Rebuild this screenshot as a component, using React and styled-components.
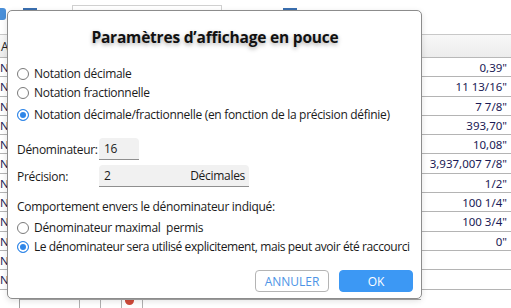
import React from 'react';
import styled, { createGlobalStyle, css } from 'styled-components';

const GlobalStyle = createGlobalStyle`
  html, body { margin: 0; padding: 0; background: #fff; }
  body { font-family: "Open Sans", "Noto Sans", sans-serif; overflow: hidden; }
`;

const Page = styled.div`
  position: relative;
  width: 511px;
  height: 308px;
  overflow: hidden;
  background: #fff;
`;

const Toolbar = styled.div`
  height: 35px;
  display: flex;
  align-items: flex-start;
  border-bottom: 1px solid #c8c8c8;
  box-sizing: border-box;
`;

const ToolIcon = styled.div`
  width: 6px;
  height: 12px;
  margin-top: 8px;
  background: #4a8fd8;
  border-radius: 0 3px 3px 0;
`;

const ToolMark = styled.div`
  width: 14px;
  height: 2px;
  margin: 8px 0 0 ${p => p.gap}px;
  background: #3a6fb0;
`;

const ToolField = styled.div`
  width: 150px;
  height: 20px;
  margin: 5px 0 0 ${p => p.gap}px;
  border: 1px solid #d0d0d0;
  box-sizing: border-box;
`;

const Sheet = styled.div`
  display: grid;
  grid-template-columns: 20px 1fr 90px;
`;

const Column = styled.div`
  display: flex;
  flex-direction: column;
  border-right: ${p => (p.edge ? '1px solid #a0a0a0' : 'none')};
`;

const HeadCell = styled.div`
  height: 23px;
  box-sizing: border-box;
  border-bottom: 1px solid #b8b8b8;
  background: linear-gradient(#f7f7f7, #ececec);
  font-size: 12px;
  line-height: 23px;
  padding-left: 1px;
  color: #222;
`;

const Cell = styled.div`
  height: 19.3px;
  box-sizing: border-box;
  border-bottom: 1px solid #b4b4b4;
  font-family: "Noto Sans", sans-serif;
  font-size: 11.5px;
  line-height: 19px;
  color: #1a1a55;
  white-space: nowrap;
  overflow: hidden;
  ${p => p.right && css`
    text-align: right;
    padding-right: 4px;
  `}
`;

const BottomStrip = styled.div`
  position: absolute;
  left: 20px;
  right: 90px;
  top: 299px;
  height: 9px;
  border-top: 1px solid #a8a8a8;
  display: flex;
  padding-left: 39px;
  box-sizing: border-box;
`;

const VLine = styled.div`
  width: 20px;
  border-right: 1px solid #b0b0b0;
  flex: none;
`;

const RedDot = styled.div`
  position: absolute;
  left: 105px;
  top: 0;
  width: 9px;
  height: 5px;
  border-radius: 0 0 5px 5px;
  background: #d04a3a;
`;

/* dialog */

const Dialog = styled.div`
  position: absolute;
  left: 7px;
  top: 10px;
  width: 415px;
  height: 289px;
  box-sizing: border-box;
  background: #fff;
  border: 1px solid #8c8c8c;
  border-radius: 5px;
  box-shadow: 0 2px 6px rgba(0, 0, 0, 0.12);
  padding: 15px 8px 0 9px;
  display: flex;
  flex-direction: column;
  font-family: "Open Sans", "Noto Sans", sans-serif;
  font-size: 12px;
  letter-spacing: -0.3px;
  color: #1a1a1a;
`;

const Title = styled.div`
  text-align: center;
  font-size: 15.5px;
  font-weight: 700;
  letter-spacing: -0.2px;
  color: #111;
  line-height: 22px;
  text-shadow: 0 2px 4px rgba(0, 0, 0, 0.35);
  margin-bottom: 17px;
`;

const Options = styled.div`
  display: flex;
  flex-direction: column;
  gap: ${p => p.gap}px;
  margin-top: ${p => p.top || 0}px;
`;

const Option = styled.label`
  display: flex;
  align-items: center;
  gap: 5px;
  height: 17px;
  white-space: nowrap;
  ${p => p.tight && css`
    letter-spacing: -0.42px;
  `}
`;

const Radio = styled.span`
  width: 12px;
  height: 12px;
  flex: none;
  box-sizing: border-box;
  border-radius: 50%;
  border: 1px solid #7a7a7a;
  background: #fff;
  ${p => p.checked && css`
    border: 1.5px solid #2f86e8;
    box-shadow: inset 0 0 0 2px #fff;
    background: #2f86e8;
  `}
`;

const Field = styled.div`
  display: flex;
  align-items: center;
  margin-top: ${p => p.top}px;
`;

const FieldLabel = styled.div`
  width: 82px;
  white-space: nowrap;
`;

const Input = styled.div`
  width: ${p => p.w}px;
  height: 22px;
  box-sizing: border-box;
  background: #f1f1f1;
  border-bottom: 1px solid #8f8f8f;
  border-radius: 4px 4px 0 0;
  display: flex;
  align-items: center;
  justify-content: space-between;
  padding: 0 4px 0 5px;
`;

const Heading = styled.div`
  margin: 11px 0 4px;
`;

const Buttons = styled.div`
  display: flex;
  justify-content: flex-end;
  gap: 10px;
  margin-top: 15px;
`;

const Button = styled.button`
  width: 74px;
  height: 22px;
  border-radius: 4px;
  font-family: "Open Sans", "Noto Sans", sans-serif;
  font-size: 12px;
  padding: 0;
  border: 1px solid #b4b4b4;
  background: #fff;
  color: #4d94e6;
  ${p => p.primary && css`
    border-color: #3c98f4;
    background: #3c98f4;
    color: #fff;
  `}
`;

const leftCells = ['N·', 'N·', 'N·', 'N·', 'N·', 'N·', 'N·', 'N·', 'N·', 'N·', 'N·', 'N·'];
const values = ['0,39"', '11 13/16"', '7 7/8"', '393,70"', '10,08"', '3,937,007 7/8"', '1/2"', '100 1/4"', '100 3/4"', '0"', '', '', ''];

export default function App() {
  return (
    <Page>
      <GlobalStyle />
      <Toolbar>
        <ToolIcon />
        <ToolMark gap={17} />
        <ToolField gap={35} />
        <ToolMark gap={61} />
      </Toolbar>
      <Sheet>
        <Column edge>
          <HeadCell>Aг</HeadCell>
          {leftCells.map((t, i) => <Cell key={i}>{t}</Cell>)}
        </Column>
        <Column />
        <Column>
          <HeadCell />
          {values.map((v, i) => <Cell key={i} right>{v}</Cell>)}
        </Column>
      </Sheet>
      <BottomStrip>
        <VLine /><VLine /><VLine /><VLine />
        <RedDot />
      </BottomStrip>

      <Dialog>
        <Title>Paramètres d’affichage en pouce</Title>
        <Options gap={2}>
          <Option><Radio />Notation décimale</Option>
          <Option><Radio />Notation fractionnelle</Option>
        </Options>
        <Options gap={0} top={5}>
          <Option><Radio checked />Notation décimale/fractionnelle (en fonction de la précision définie)</Option>
        </Options>
        <Field top={15}>
          <FieldLabel>Dénominateur:</FieldLabel>
          <Input w={40}>16</Input>
        </Field>
        <Field top={5}>
          <FieldLabel>Précision:</FieldLabel>
          <Input w={150}><span>2</span><span>Décimales</span></Input>
        </Field>
        <Heading>Comportement envers le dénominateur indiqué:</Heading>
        <Options gap={2}>
          <Option><Radio />Dénominateur maximal&nbsp; permis</Option>
          <Option tight><Radio checked />Le dénominateur sera utilisé explicitement, mais peut avoir été raccourci</Option>
        </Options>
        <Buttons>
          <Button>ANNULER</Button>
          <Button primary>OK</Button>
        </Buttons>
      </Dialog>
    </Page>
  );
}
